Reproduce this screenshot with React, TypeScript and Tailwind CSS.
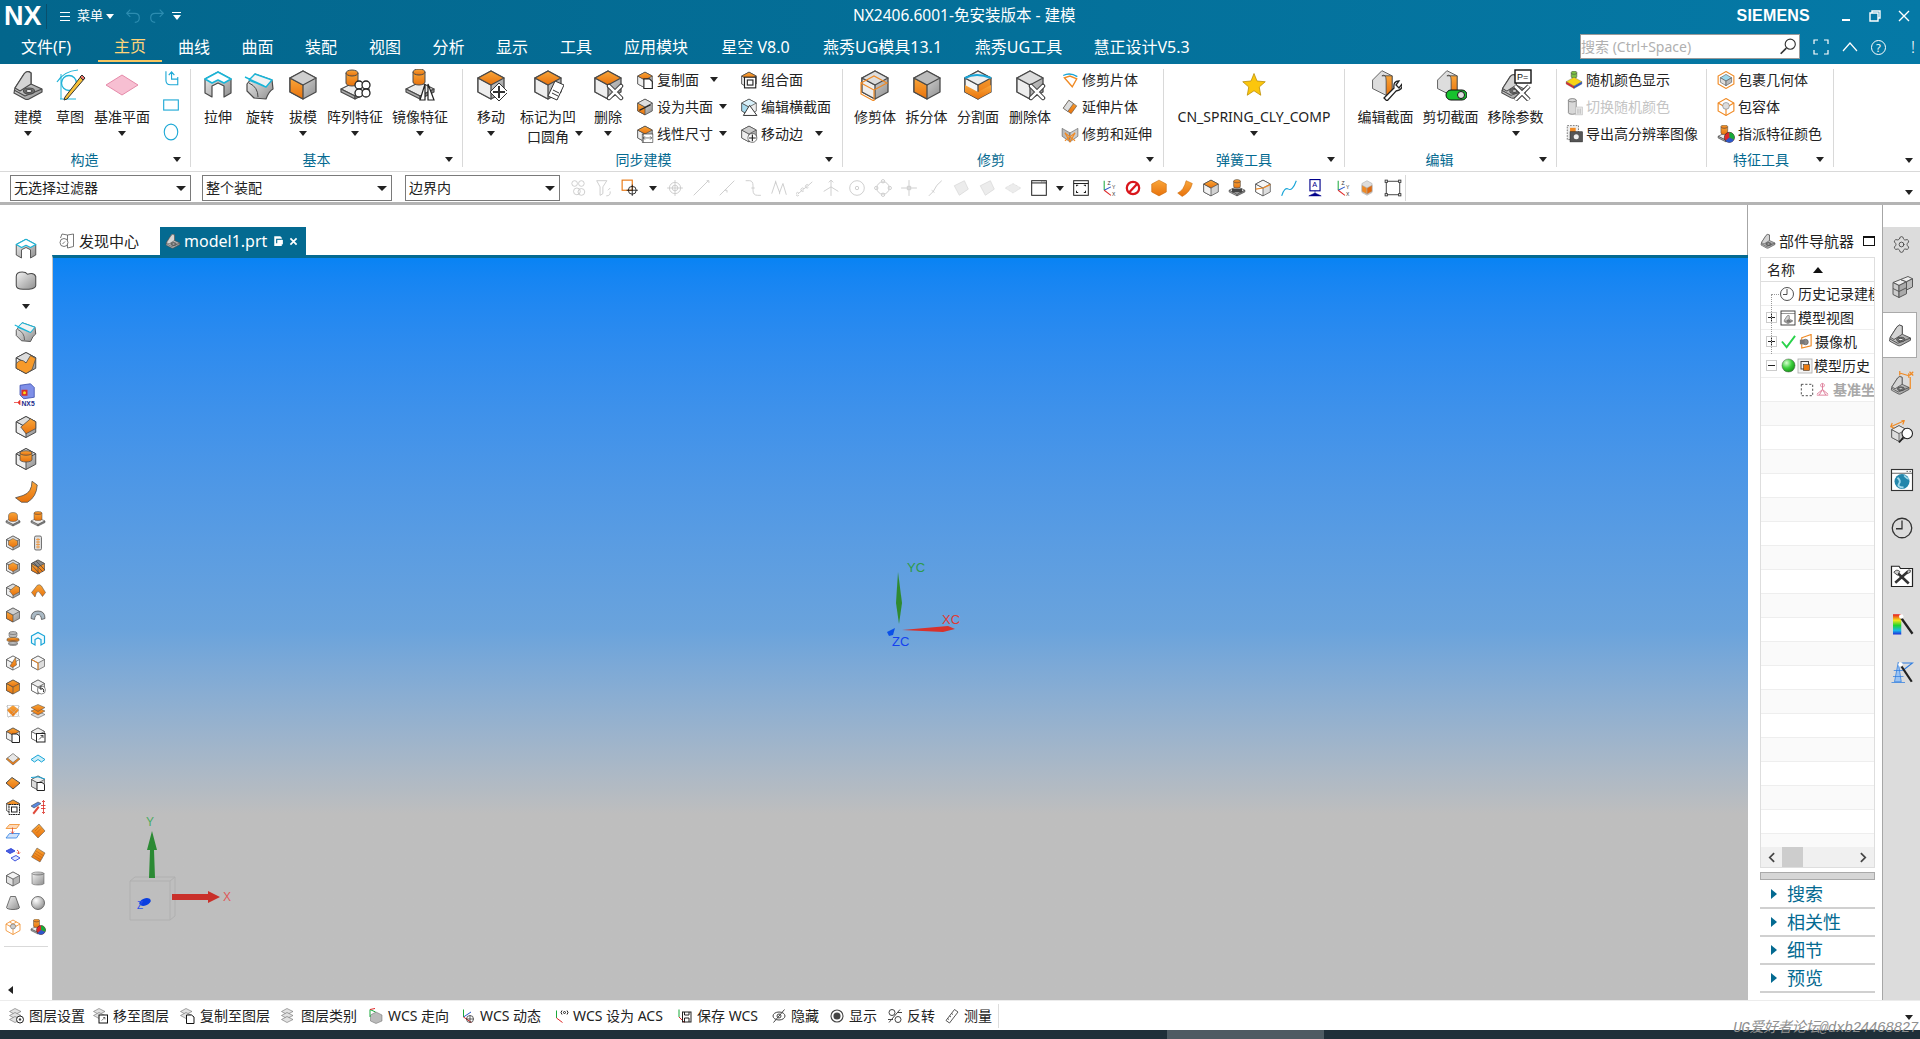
import React from "react";
import { Settings } from "lucide-react";

const OR = "url(#go)";
const GR = "url(#gg)";
const DK = "#4a4a4a";

const cube = (t: string, l: string, r: string) => (
  <g stroke={DK} strokeWidth="1.3" strokeLinejoin="round">
    <polygon points="16,2 29,9 29,23 16,30 3,23 3,9" fill={r} />
    <polygon points="3,9 16,16 16,30 3,23" fill={l} />
    <polygon points="16,2 29,9 16,16 3,9" fill={t} />
  </g>
);
const cross = (
  <g fill="none" strokeLinecap="round">
    <path d="M17 17l12 12M29 17L17 29" stroke="#333" strokeWidth="4.5" />
    <path d="M17 17l12 12M29 17L17 29" stroke="#fff" strokeWidth="2.5" />
  </g>
);
const bracket = (
  <g stroke={DK} strokeWidth="1.2" strokeLinejoin="round">
    <path d="M3 19 12 5Q15 1 19 4L19 15 30 20 30 23 17 30Q15 31 13 30L2 24Z" fill={GR} />
    <path d="M3 19 12 5Q15 1 19 4L19 15 8 22Z" fill="#d4d4d4" />
    <path d="M2 21 13 27 30 20" fill="none" />
    <ellipse cx="17" cy="22" rx="5.5" ry="3" fill="#777" />
    <ellipse cx="17" cy="22" rx="3" ry="1.5" fill="#eee" />
  </g>
);
const plate = (
  <g stroke={DK} strokeWidth="1.2" strokeLinejoin="round">
    <polygon points="16,13 30,20 16,27 2,20" fill="#ececec" />
    <polygon points="2,20 16,27 16,30 2,23" fill="#aaa" />
    <polygon points="30,20 16,27 16,30 30,23" fill="#888" />
  </g>
);
const cyl = (f: string, cx = 16, top = 3, h = 13, rx = 6) => (
  <g stroke={DK} strokeWidth="1">
    <path d={`M${cx - rx} ${top + 2}V${top + h}A${rx} 3 0 0 0 ${cx + rx} ${top + h}V${top + 2}`} fill={f} />
    <ellipse cx={cx} cy={top + 2} rx={rx} ry="3" fill={f} />
  </g>
);
const pl = "fill-none stroke-[#c9c9c9] stroke-[1.6]";

const ICONS: Record<string, React.ReactNode> = {
  bracket,
  sketch: (
    <g>
      <path d="M3 13Q10 2 24 1" fill="none" stroke="#1fb3d8" strokeWidth="1.2" />
      <path d="M6 30H22M7 5V30" fill="none" stroke="#1fb3d8" strokeWidth="1" />
      <circle cx="15" cy="14" r="7.5" fill="none" stroke="#1fb3d8" strokeWidth="1.3" />
      <path d="M11 28 10 31 13 30 31 9 28 6Z" fill="#f8c23a" stroke="#333" strokeWidth="1" />
      <path d="M28 6 31 9 29 11 26 8Z" fill="#e8766f" stroke="#333" strokeWidth="1" />
    </g>
  ),
  plane: <polygon points="16,6 32,16 16,26 0,16" fill="#f7bfd2" stroke="#e58aa9" strokeWidth="1" />,
  datumL: <path d="M7 4V20Q7 28 15 28H28V14M12 11 17 5 22 11M17 5V18H28" fill="none" stroke="#1fa9d6" strokeWidth="2" />,
  rectB: <rect x="3" y="7" width="26" height="18" fill="none" stroke="#1fa9d6" strokeWidth="2" />,
  circB: <ellipse cx="16" cy="16" rx="12" ry="14" fill="none" stroke="#1fa9d6" strokeWidth="2" />,
  extrude: (
    <g strokeLinejoin="round">
      <path d="M3 10 16 3 29 10V24L22 28V17L16 14 10 17V28L3 24Z" fill={GR} stroke={DK} strokeWidth="1.2" />
      <path d="M3 10 16 3 29 10 22 14 16 11 10 14Z" fill="#fff" stroke="#19b5d8" strokeWidth="1.6" />
    </g>
  ),
  revolve: (
    <g strokeLinejoin="round">
      <path d="M3 15 11 5 28 11 29 20Q25 22 22 30L10 29 3 22Z" fill={GR} stroke={DK} strokeWidth="1.2" />
      <path d="M1 8 20 17M11 5 28 11 22 18 5 11Z" fill="#f3f3f3" stroke="#19b5d8" strokeWidth="1.4" />
      <path d="M5 14Q14 18 14 28" fill="none" stroke={DK} />
    </g>
  ),
  draft: cube("#cfcfcf", OR, GR),
  pattern: (
    <g>
      {plate}
      {cyl(OR, 13, 2, 12)}
      <g fill="#fff" stroke="#222" strokeWidth="1.3">
        <circle cx="20" cy="16" r="4" />
        <circle cx="27" cy="16" r="4" />
        <circle cx="20" cy="24" r="4" />
        <circle cx="27" cy="24" r="4" />
      </g>
    </g>
  ),
  mirror: (
    <g>
      {plate}
      {cyl(OR, 15, 1, 12)}
      <path d="M16 31 21 15V31ZM24 31V15L30 31Z" fill="#fff" stroke="#222" strokeWidth="1.2" />
    </g>
  ),
  move: (
    <g>
      {cube(OR, "#eee", GR)}
      <polygon points="24,14 33,23 24,32 15,23" fill="#fff" stroke="#333" />
      <path d="M24 17V29M18 23H30" stroke="#333" strokeWidth="2" />
    </g>
  ),
  tag: (
    <g>
      {cube(OR, "#eee", GR)}
      <polygon points="23,12 32,16 25,31 16,27" fill="#fff" stroke="#333" />
      <path d="M21 21l6 3M20 24l6 3" stroke="#333" />
    </g>
  ),
  del: (
    <g>
      {cube(OR, "#eee", GR)}
      {cross}
    </g>
  ),
  copyFace: (
    <g>
      {cube(OR, "#eee", GR)}
      <path d="M14 14H24L29 19V31H14Z" fill="#fff" stroke="#222" strokeWidth="2" />
    </g>
  ),
  coplanar: (
    <g>
      {cube("#ddd", OR, GR)}
      <path d="M6 22 26 12" stroke="#222" strokeWidth="2" />
    </g>
  ),
  linear: (
    <g>
      {cube(OR, "#eee", GR)}
      <rect x="11" y="16" width="19" height="15" fill="#fff" stroke="#222" />
      <path d="M13 23H28M16 20 13 23 16 26M25 20 28 23 25 26M13 16V31" stroke="#222" fill="none" />
    </g>
  ),
  combine: (
    <g>
      {cube(OR, "#eee", GR)}
      <rect x="8" y="11" width="20" height="19" fill="#fff" stroke="#222" strokeWidth="2" />
      <rect x="13" y="16" width="10" height="9" fill="none" stroke="#222" strokeWidth="2" />
    </g>
  ),
  section: (
    <g>
      {cube("#d8f0fa", "#a8dcf0", "#eee")}
      <path d="M17 13 30 31H6Z" fill="#fff" stroke="#222" strokeWidth="1.6" />
    </g>
  ),
  moveEdge: (
    <g>
      {cube("#ccc", "#eee", GR)}
      <circle cx="22" cy="23" r="8" fill="#fff" stroke="#222" />
      <path d="M22 17V29M16 23H28" stroke="#222" strokeWidth="2" />
    </g>
  ),
  trimBody: (
    <g>
      {cube("#ddd", "#eee", GR)}
      <path d="M2 14 15 21 15 32 2 25ZM2 14 15 7 28 14 15 21" fill="none" stroke="#f08a24" strokeWidth="1.2" />
    </g>
  ),
  split: cube("#bbb", OR, GR),
  divide: (
    <g>
      {cube("#eee", "#f5f5f5", OR)}
      <polygon points="3,16 16,23 29,16 29,23 16,30 3,23" fill={OR} />
      <path d="M3 9Q14 3 29 9" fill="none" stroke="#19a5d8" strokeWidth="2" />
    </g>
  ),
  delBody: (
    <g>
      {cube("#ddd", "#eee", GR)}
      {cross}
    </g>
  ),
  trimSheet: (
    <g fill="none" strokeWidth="2.4">
      <path d="M4 8Q16 2 29 10" stroke="#19a5d8" />
      <path d="M6 12 20 28 28 14 16 9Z" stroke="#f08a24" />
    </g>
  ),
  extSheet: (
    <g>
      <polygon points="14,4 28,14 18,28 4,18" fill={OR} stroke={DK} />
      <polygon points="14,4 22,10 12,24 4,18" fill="#ddd" stroke={DK} />
    </g>
  ),
  trimExt: (
    <g stroke={DK} strokeWidth="1">
      <path d="M2 6 16 14V30L2 20Z" fill="#bbb" />
      <path d="M30 6 16 14V30L30 20Z" fill="#ccc" />
      <path d="M7 14 16 30 25 14M7 28 25 14M25 28 7 14" stroke="#f08a24" strokeWidth="2" fill="none" />
    </g>
  ),
  star: (
    <g transform="translate(4 3) scale(.75)">
      <polygon points="16,2 20,12 31,13 23,20 25,31 16,25 7,31 9,20 1,13 12,12" fill="#fbc60d" stroke="#b88a00" strokeWidth="1" />
    </g>
  ),
  arch: (
    <g stroke={DK} strokeLinejoin="round">
      <path d="M3 13 14 2 26 8V28L19 31 3 23Z" fill="#ddd" />
      <path d="M14 8Q19 5 19 14V31L26 28V8Z" fill={OR} />
      <path d="M3 13 14 8V26" fill="none" />
      <path d="M3 18 14 14" fill="none" />
    </g>
  ),
  editCut: (
    <g>
      <g transform="scale(.85)">
        <path d="M3 13 14 2 26 8V28L19 31 3 23Z" fill="#ddd" stroke={DK} />
        <path d="M14 8Q19 5 19 14V31L26 28V8Z" fill={OR} stroke={DK} />
      </g>
      <path d="M14 29 24 19Q23 12 29 12L26 16 29 19 32 15Q33 21 26 22L17 32Z" fill="#fff" stroke="#222" strokeWidth="1.3" />
    </g>
  ),
  clipCut: (
    <g>
      <g transform="scale(.85)">
        <path d="M3 13 14 2 26 8V28L19 31 3 23Z" fill="#ddd" stroke={DK} />
        <path d="M14 8Q19 5 19 14V31L26 28V8Z" fill={OR} stroke={DK} />
      </g>
      <rect x="11" y="21" width="21" height="10" rx="5" fill="#17c22e" stroke="#111" />
      <circle cx="26" cy="26" r="3.5" fill="#ddd" stroke="#111" />
    </g>
  ),
  removeParam: (
    <g>
      <g transform="scale(.85) translate(0 4)">{bracket}</g>
      <rect x="15" y="1" width="16" height="13" fill="#fff" stroke="#111" strokeWidth="1.4" />
      <text x="17" y="11" fontSize="9" fill="#111" fontFamily="Liberation Sans">P=</text>
      <path d="M15 17 29 31M29 17 15 31" stroke="#333" strokeWidth="4.5" />
      <path d="M15 17 29 31M29 17 15 31" stroke="#fff" strokeWidth="2.5" />
    </g>
  ),
  randColor: (
    <g stroke="#555" strokeWidth=".6">
      {cyl("#7cc142", 16, 1, 9, 5)}
      <polygon points="16,11 30,19 16,27 2,19" fill="#f7d417" />
      <polygon points="2,19 16,27 16,31 2,23" fill="#e02828" />
      <polygon points="30,19 16,27 16,31 30,23" fill="#2b58c9" />
    </g>
  ),
  toggleColor: (
    <g fill="#d2d2d2" stroke="#bbb">
      {cyl("#d8d8d8", 13, 2, 24, 7)}
      <rect x="19" y="16" width="12" height="14" fill="#e6e6e6" />
      <path d="M23 19V28M27 19V28" stroke="#999" />
    </g>
  ),
  exportImg: (
    <g>
      <rect x="4" y="1" width="20" height="25" fill="#eee" stroke="#222" strokeDasharray="3 2" />
      <rect x="9" y="5" width="10" height="8" fill="#f08a24" />
      <rect x="9" y="12" width="22" height="18" fill="#555" stroke="#222" />
      <circle cx="20" cy="21" r="4.5" fill="#eee" />
    </g>
  ),
  wrap: (
    <g>
      <polygon points="16,1 30,9 30,23 16,31 2,23 2,9" fill="#fff" stroke="#f08a24" strokeWidth="2" />
      <polygon points="16,6 26,12 16,18 6,12" fill="#9fd7ea" stroke={DK} />
      <polygon points="6,12 16,18 16,26 6,20" fill="#ddd" stroke={DK} />
      <polygon points="26,12 16,18 16,26 26,20" fill="#bbb" stroke={DK} />
    </g>
  ),
  contain: (
    <g fill="none" stroke="#f08a24" strokeWidth="2">
      <polygon points="16,1 30,9 30,23 16,31 2,23 2,9" />
      <path d="M2 9 16 17 30 9M16 17V31" />
      <circle cx="16" cy="14" r="6" fill="#ddd" stroke="#777" strokeWidth="1" />
    </g>
  ),
  assignColor: (
    <g>
      {plate}
      {cyl(OR, 13, 1, 13, 6)}
      <circle cx="22" cy="22" r="9" fill="#e02828" stroke="#222" />
      <path d="M22 22V13A9 9 0 0 1 30 26Z" fill="#18a93a" />
      <path d="M22 22 30 26A9 9 0 0 1 15 28Z" fill="#2b58c9" />
    </g>
  ),
  cylGray: cyl(GR, 16, 3, 22, 12),
  blob: (
    <path d="M3 10Q3 4 11 4Q16 4 18 7Q27 4 29 10V22Q29 26 20 27H12Q3 27 3 22Z" fill={GR} stroke={DK} strokeWidth="1.4" />
  ),
  face: (
    <g>
      {cube("#ddd", "#eee", GR)}
      <path d="M3 17Q9 8 16 16L22 6 29 10 24 25 16 30 3 23Z" fill="#f79a2a" stroke={DK} />
    </g>
  ),
  nx5: (
    <g>
      <polygon points="8,3 22,1 27,6 27,19 13,21 8,16" fill="#7f8fe8" stroke="#3347a8" />
      <rect x="10" y="9" width="8" height="8" fill="#d8302a" />
      <circle cx="14" cy="13" r="2" fill="#ffd41a" />
      <text x="10" y="30" fontSize="9" fontWeight="700" fill="#1b2a8a" fontFamily="Liberation Sans">NX5</text>
      <path d="M0 26H5L8 23V29L5 26" fill="#e8322a" stroke="#e8322a" />
    </g>
  ),
  faceBlend: (
    <g>
      {cube("#ddd", "#eee", GR)}
      <polygon points="9,16 22,5 29,9 29,18 16,25" fill={OR} stroke={DK} />
    </g>
  ),
  inner: (
    <g>
      {cube("#ddd", "#eee", GR)}
      {cyl(OR, 16, 6, 11, 8)}
    </g>
  ),
  curved: <path d="M2 25 12 22Q24 18 24 3L31 8Q30 24 18 31L10 31Z" fill={OR} stroke={DK} />,
  pOrange: (
    <g>
      {plate}
      <path d="M7 10Q7 3 16 3Q25 3 25 10V16Q25 21 16 21Q7 21 7 16Z" fill={OR} stroke={DK} />
    </g>
  ),
  pCyl: (
    <g>
      {plate}
      {cyl(OR, 16, 2, 14, 8)}
    </g>
  ),
  hexO: (
    <g>
      {cube("#ddd", "#eee", GR)}
      <polygon points="16,7 25,12 25,20 16,25 7,20 7,12" fill={OR} stroke={DK} />
    </g>
  ),
  tall: (
    <g>
      <rect x="9" y="2" width="14" height="28" rx="3" fill="#ddd" stroke={DK} strokeWidth="1.5" />
      <path d="M12 9H20M12 14H20M12 19H20M12 24H20M16 6V27" stroke="#f08a24" strokeWidth="1.4" />
    </g>
  ),
  hatch: (
    <g>
      {cube("#888", OR, OR)}
      <path d="M6 6 26 26M12 4 30 22M3 12 20 30" stroke="#444" strokeWidth="1.4" />
    </g>
  ),
  tube: <path d="M3 19 15 4Q20 2 23 6L31 19 25 27 20 20Q17 15 13 19L10 28Z" fill={OR} stroke={DK} />,
  pipe: <path d="M2 23Q2 8 16 8Q30 8 30 23L23 25Q22 15 16 15Q10 15 9 25Z" fill="#aab9c4" stroke={DK} strokeWidth="1.5" />,
  disc: (
    <g>
      {cyl("#bbb", 16, 2, 8, 8)}
      {cyl(OR, 16, 14, 5, 12)}
      {cyl("#bbb", 16, 22, 4, 9)}
    </g>
  ),
  cyanU: <path d="M3 10 16 3 29 10V24L22 28V17L16 14 10 17V28L3 24Z" fill="#f2fafd" stroke="#19a5d8" strokeWidth="2.4" />,
  wedge: (
    <g>
      {cube("#fff", "#eee", "#fff")}
      <polygon points="10,22 21,5 23,20 15,25" fill={OR} stroke={DK} />
    </g>
  ),
  cubeLine: (
    <g>
      {cube("#f5f5f5", "#fff", "#ddd")}
      <path d="M3 9 16 16 16 30" fill="none" stroke="#f08a24" strokeWidth="2" />
    </g>
  ),
  orangeCube: cube(OR, OR, "#e98a1f"),
  cubeBack: (
    <g>
      {cube("#eee", "#fff", "#ddd")}
      <circle cx="23" cy="22" r="8" fill="#fff" stroke="#222" />
      <path d="M27 26Q29 18 20 18M23 14 19 18 23 22" fill="none" stroke="#222" strokeWidth="2" />
    </g>
  ),
  offset: (
    <g>
      <polygon points="16,5 28,14 16,27 4,14" fill={OR} stroke="#e08a2e" />
      <path d="M2 6 30 28M30 6 6 30" stroke="#bbb" />
      <rect x="5" y="5" width="22" height="22" fill="none" stroke="#aaa" />
    </g>
  ),
  stack: (
    <g stroke={DK}>
      <polygon points="16,17 30,23 16,30 2,23" fill="#ddd" />
      <polygon points="16,10 30,16 16,24 2,16" fill={OR} />
      <polygon points="16,3 30,9 16,17 2,9" fill={OR} />
    </g>
  ),
  cubeCopy: (
    <g>
      {cube(OR, "#eee", "#ddd")}
      <path d="M14 14H24L29 18V31H14Z" fill="#fff" stroke="#222" strokeWidth="2" />
    </g>
  ),
  cubeOut: (
    <g>
      {cube("#eee", "#fff", "#ddd")}
      <rect x="13" y="13" width="17" height="17" fill="#fff" stroke="#222" strokeWidth="2" />
      <path d="M18 25 26 17M21 17H26V22" fill="none" stroke="#222" strokeWidth="1.6" />
    </g>
  ),
  oDia: (
    <g>
      <polygon points="16,6 30,16 16,28 2,16" fill={OR} stroke={DK} />
      <polygon points="16,5 27,14 16,23 5,14" fill="#e8e8e8" stroke={DK} />
    </g>
  ),
  cyanChev: <path d="M2 17 16 8 30 17 23 22 16 17 9 22Z" fill="#cbeef8" stroke="#19a5d8" strokeWidth="2" />,
  oDia2: <polygon points="14,5 30,16 16,28 2,16" fill={OR} stroke={DK} strokeWidth="2" />,
  cubeCopyC: (
    <g>
      {cube("#eee", "#ddd", "#ccc")}
      <path d="M2 5Q16 1 30 8" fill="none" stroke="#19a5d8" strokeWidth="2" />
      <path d="M14 15H24L29 19V31H14Z" fill="#fff" stroke="#222" strokeWidth="2" />
    </g>
  ),
  cubeWin: (
    <g>
      {cube(OR, "#eee", "#ddd")}
      <rect x="8" y="11" width="21" height="20" fill="#fff" stroke="#222" strokeWidth="2" strokeDasharray="4 1" />
      <rect x="13" y="16" width="11" height="10" fill="none" stroke="#222" strokeWidth="2" />
    </g>
  ),
  measureW: (
    <g>
      <path d="M2 14 16 6 22 9 8 18Z" fill="#5a89e0" stroke="#333" />
      <path d="M5 28 16 14 19 17 8 31Z" fill="#e04a3a" />
      <path d="M27 3V29M22 13H31M22 19H31M24 6 27 3 30 6M24 26 27 29 30 26" stroke="#d9281e" fill="none" strokeWidth="1.6" />
    </g>
  ),
  planes: (
    <g>
      <polygon points="9,3 29,3 23,11 2,11" fill="#fdd9b8" stroke="#f08a24" strokeWidth="1.6" />
      <polygon points="9,21 29,21 23,30 2,30" fill="#cfe2fb" stroke="#2f7de0" strokeWidth="1.6" />
      <path d="M15 9V20M12 17 15 21 18 17" stroke="#e0402a" fill="none" strokeWidth="1.5" />
    </g>
  ),
  oSq: (
    <g>
      <polygon points="18,2 30,16 16,30 3,16" fill={OR} stroke={DK} />
      <path d="M10 16 18 8M13 20 22 11" stroke="#b85a08" />
    </g>
  ),
  bluePl: (
    <g fill="#dfe6ff" stroke="#2d43d8" strokeWidth="1.8">
      <polygon points="2,8 12,3 20,8 10,13" fill="#4a5fe0" />
      <polygon points="12,22 22,17 30,22 20,28" />
      <path d="M24 6Q29 8 27 13M24 11 27 14 30 11" stroke="#e0402a" fill="none" />
    </g>
  ),
  oStack2: (
    <g stroke={DK}>
      <polygon points="14,2 30,12 20,30 3,20" fill={OR} />
      <path d="M9 12 25 22M6 16 22 26M12 8 28 18" stroke="#b85a08" />
    </g>
  ),
  cubeG: cube("#f3f3f3", "#e2e2e2", "#b5b5b5"),
  cone: <path d="M11 3H21L29 25A13 4 0 0 1 3 25Z" fill={GR} stroke={DK} strokeWidth="1.5" />,
  sphere: <circle cx="16" cy="16" r="13" fill="url(#gs)" stroke={DK} strokeWidth="1.5" />,
  orWire: (
    <g fill="none" stroke="#f08a24" strokeWidth="1.6">
      <polygon points="16,2 30,10 30,23 16,31 2,23 2,10" />
      <path d="M2 10 16 18 30 10M16 18V31M9 6 23 14M23 6 9 14" />
      <circle cx="16" cy="15" r="5" fill="#ccc" stroke="#888" />
    </g>
  ),
  dLink: (
    <g className={pl}>
      <circle cx="10" cy="8" r="5" />
      <circle cx="22" cy="8" r="5" />
      <circle cx="14" cy="22" r="6" />
      <circle cx="22" cy="23" r="6" />
    </g>
  ),
  dFilter: <path d="M3 3H21L14 14V26L9 29V14ZM20 30Q28 30 27 22M23 20 27 16" className={pl} />,
  snapO: (
    <g>
      <rect x="2" y="2" width="18" height="18" fill="none" stroke="#e8740c" strokeWidth="2" />
      <circle cx="20" cy="20" r="7" fill="none" stroke="#111" strokeWidth="1.5" />
      <path d="M20 10V30M10 20H30" stroke="#111" strokeWidth="1.5" />
    </g>
  ),
  dTarget: <path d="M16 2V30M2 16H30M26 16A10 10 0 1 1 6 16A10 10 0 1 1 26 16M21 16A5 5 0 1 1 11 16A5 5 0 1 1 21 16" className={pl} />,
  dLine: <path d="M3 29 29 3M26 3H30V7" className={pl} />,
  dLine2: <path d="M3 29 29 3M12 20H16V24" className={pl} />,
  dCurve: <path d="M3 3H10Q16 3 16 12V20Q16 29 24 29H30M13 16H19" className={pl} />,
  dZig: <path d="M3 26 10 5 17 24 23 8 29 28M10 3V8M17 22V27" className={pl} />,
  dDots: <path d="M3 27 12 19 20 13 29 5M5 25A3 3 0 1 0 5 29M14 17A3 3 0 1 0 14 21M22 11A3 3 0 1 0 22 15" className={pl} />,
  dFork: <path d="M16 30V14M16 14 3 22M16 14 29 22M16 14V2M12 6 16 2 20 6" className={pl} />,
  dRing: (
    <g className={pl}>
      <circle cx="16" cy="16" r="13" />
      <circle cx="16" cy="16" r="3" />
    </g>
  ),
  dRing4: (
    <g className={pl}>
      <circle cx="16" cy="16" r="11" />
      <circle cx="16" cy="4" r="3" />
      <circle cx="16" cy="28" r="3" />
      <circle cx="4" cy="16" r="3" />
      <circle cx="28" cy="16" r="3" />
    </g>
  ),
  dPlus: <path d="M16 2V30M2 16H30M13 13H19V19H13Z" className={pl} />,
  dCurve2: <path d="M28 3Q18 10 13 22L5 30M10 20 15 24" className={pl} />,
  dFace: <path d="M4 12 22 3 29 18 13 29Z" fill="#ececec" stroke="#cfcfcf" />,
  dDia: <polygon points="16,8 30,16 16,25 2,16" fill="#ececec" stroke="#cfcfcf" strokeDasharray="2 1" />,
  window: (
    <g fill="none" stroke="#222" strokeWidth="1.8">
      <rect x="3" y="3" width="26" height="26" />
      <path d="M3 7H29" />
      <path d="M20 5H22M24 5H26" strokeWidth="1" />
    </g>
  ),
  fit: (
    <g fill="none" stroke="#222" strokeWidth="1.8">
      <rect x="3" y="3" width="26" height="26" />
      <path d="M3 8H29M8 13V11H11M24 13V11H21M8 21V24H11M24 21V24H21" />
    </g>
  ),
  axes: (
    <g fill="none" strokeWidth="1.8">
      <path d="M11 20V3" stroke="#18a93a" />
      <path d="M11 20 23 14" stroke="#2b58c9" />
      <path d="M11 20 23 29" stroke="#e02828" />
      <text x="17" y="10" fontSize="9" fill="#333" stroke="none" fontFamily="Liberation Sans">Z</text>
      <text x="25" y="18" fontSize="9" fill="#333" stroke="none" fontFamily="Liberation Sans">Y</text>
      <text x="25" y="31" fontSize="9" fill="#333" stroke="none" fontFamily="Liberation Sans">X</text>
    </g>
  ),
  no: (
    <g fill="none" stroke="#d9161c" strokeWidth="4">
      <circle cx="16" cy="16" r="11" />
      <path d="M9 24 24 8" />
    </g>
  ),
  orangeHex: <polygon points="16,2 29,9 29,23 16,30 3,23 3,9" fill={OR} stroke="#c96a0a" />,
  orangeSheet: <path d="M3 25Q14 20 18 3L29 8Q25 24 11 31Z" fill={OR} stroke="#c96a0a" />,
  cubeTop: cube(OR, "#f2f2f2", "#d2d2d2"),
  stamp: (
    <g>
      {plate}
      {cyl(OR, 16, 2, 11, 6)}
      <rect x="7" y="17" width="18" height="7" fill="#444" />
    </g>
  ),
  cubeW: (
    <g>
      {cube("#f5f5f5", "#fff", "#ddd")}
      <path d="M3 18 16 16 29 10" fill="none" stroke="#f08a24" strokeWidth="2" />
    </g>
  ),
  spline: <path d="M3 30Q8 14 15 18T29 3" fill="none" stroke="#19a5d8" strokeWidth="2" />,
  pin: (
    <g>
      <rect x="7" y="1" width="18" height="20" fill="#fff" stroke="#00008b" strokeWidth="2" />
      <text x="11" y="15" fontSize="13" fill="#00008b" fontFamily="Liberation Sans">A</text>
      <path d="M16 21V27M5 30H27L16 25Z" stroke="#00008b" fill="#00008b" />
    </g>
  ),
  smallO: (
    <g stroke="#aaa">
      <polygon points="16,3 25,8 25,24 16,29 7,24 7,8" fill="#ddd" />
      <polygon points="7,11 16,16 16,27 7,22" fill="#f08a24" />
      <polygon points="25,11 16,16 16,27 25,22" fill="#e06a10" />
    </g>
  ),
  rectC: (
    <g stroke="#333" fill="#fff" strokeWidth="1.6">
      <rect x="4" y="4" width="24" height="24" fill="none" />
      <rect x="2" y="2" width="4" height="4" />
      <rect x="26" y="2" width="4" height="4" />
      <rect x="2" y="26" width="4" height="4" />
      <rect x="26" y="26" width="4" height="4" />
    </g>
  ),
  discover: (
    <g fill="none" stroke="#555" strokeWidth="1.6">
      <path d="M17 4 29 2V27L17 30ZM17 4 6 2 3 10" />
      <circle cx="10" cy="19" r="8" fill="#fff" />
      <path d="M7 22 12 17" />
    </g>
  ),
  docSm: (
    <g fill="#fff">
      <path d="M6 3H22L26 7V29H6Z" />
      <path d="M11 10H26V22H11Z" fill="#046a91" />
      <path d="M14 13H29V25H14Z" />
    </g>
  ),
  close: <path d="M7 7 25 25M25 7 7 25" stroke="#fff" strokeWidth="5" />,
  layers: (
    <g stroke="#555" fill="#e2e2e2">
      <polygon points="12,1 24,7 12,13 1,7" />
      <polygon points="12,9 24,15 12,21 1,15" />
      <polygon points="12,17 24,23 12,29 1,23" />
    </g>
  ),
  layerSet: (
    <g stroke="#555" fill="#e2e2e2">
      <polygon points="12,1 24,7 12,13 1,7" />
      <polygon points="12,9 24,15 12,21 1,15" />
      <polygon points="12,17 24,23 12,29 1,23" />
      <circle cx="22" cy="23" r="7" fill="#fff" stroke="#222" strokeWidth="2" />
      <circle cx="22" cy="23" r="2" fill="#222" />
    </g>
  ),
  layerMove: (
    <g stroke="#555" fill="#e2e2e2">
      <polygon points="12,1 24,7 12,13 1,7" />
      <polygon points="12,9 24,15 12,21 1,15" />
      <rect x="12" y="14" width="17" height="16" fill="#fff" stroke="#111" strokeWidth="2" />
      <path d="M17 25 24 19M20 19H24V23" fill="none" stroke="#111" />
    </g>
  ),
  layerCopy: (
    <g stroke="#555" fill="#e2e2e2">
      <polygon points="12,1 24,7 12,13 1,7" />
      <polygon points="12,9 24,15 12,21 1,15" />
      <path d="M13 14H23L28 18V31H13Z" fill="#fff" stroke="#111" strokeWidth="2" />
    </g>
  ),
  wcsO: (
    <g>
      <polygon points="16,8 28,14 28,26 16,31 5,26 5,14" fill="#bbb" stroke="#666" />
      <path d="M4 18V3M4 3 15 8" stroke="#18a93a" strokeWidth="2" />
      <path d="M4 3 14 1" stroke="#e02828" strokeWidth="2" />
    </g>
  ),
  wcsD: (
    <g fill="none" strokeWidth="2">
      <path d="M7 18V3" stroke="#18a93a" />
      <path d="M7 18 22 8" stroke="#2b58c9" />
      <path d="M7 18 23 29" stroke="#e02828" />
      <circle cx="20" cy="22" r="7" stroke="#222" strokeWidth="1.4" />
      <path d="M20 15V29M13 22H27" stroke="#222" strokeWidth="1.4" />
    </g>
  ),
  wcsA: (
    <g fill="none" strokeWidth="2">
      <path d="M7 20V5" stroke="#18a93a" />
      <path d="M7 20 19 29" stroke="#e02828" />
      <path d="M18 5Q14 9 18 13M28 5Q32 9 28 13" stroke="#222" />
      <circle cx="23" cy="9" r="2" stroke="#222" />
    </g>
  ),
  wcsS: (
    <g fill="none" strokeWidth="2">
      <path d="M4 18V3" stroke="#18a93a" />
      <path d="M4 18 15 29" stroke="#e02828" />
      <rect x="11" y="8" width="17" height="20" stroke="#222" />
      <path d="M15 8V14H24V8M15 28V20H24V28" stroke="#222" />
    </g>
  ),
  hide: (
    <g fill="none" stroke="#444" strokeWidth="2">
      <ellipse cx="16" cy="16" rx="12" ry="8" />
      <circle cx="16" cy="16" r="4" />
      <path d="M27 3 5 29" />
    </g>
  ),
  show: (
    <g fill="none" stroke="#444" strokeWidth="2.2">
      <circle cx="16" cy="16" r="12" />
      <circle cx="16" cy="16" r="6" fill="#444" />
    </g>
  ),
  invert: (
    <g fill="none" stroke="#444" strokeWidth="2">
      <circle cx="10" cy="9" r="6" />
      <circle cx="22" cy="23" r="6" />
      <path d="M26 3 4 29M20 9H30M2 23H12" />
    </g>
  ),
  measure: <path d="M4 25 21 3 28 8 11 30ZM7 21 10 23M11 16 14 18M15 11 18 13" fill="none" stroke="#444" strokeWidth="1.8" />,
  mag: (
    <g fill="none" stroke="#333" strokeWidth="2">
      <circle cx="20" cy="11" r="9" />
      <path d="M13 18 3 28" strokeWidth="3" />
    </g>
  ),
  clock: (
    <g fill="none" stroke="#333" strokeWidth="1.7">
      <circle cx="16" cy="16" r="13" />
      <path d="M16 6V17H8" />
    </g>
  ),
  viewFolder: (
    <g>
      <rect x="2" y="2" width="28" height="28" fill="#fff" stroke="#333" strokeWidth="1.8" />
      <path d="M2 7H30" stroke="#333" />
      <g transform="translate(7 9) scale(.6)">{bracket}</g>
    </g>
  ),
  cam: (
    <g>
      <polygon points="8,8 28,1 28,25 8,30" fill="#fff" stroke="#f08a24" strokeWidth="2.4" />
      <circle cx="16" cy="17" r="6" fill="#888" stroke="#444" />
      <rect x="4" y="12" width="10" height="10" fill="#777" />
    </g>
  ),
  ball: <circle cx="16" cy="16" r="14" fill="url(#gb)" stroke="#555" />,
  history: (
    <g>
      <rect x="2" y="2" width="28" height="28" fill="#f4f4f4" stroke="#aaa" strokeWidth="1.6" />
      <rect x="8" y="7" width="15" height="15" fill="none" stroke="#333" strokeWidth="1.8" />
      <rect x="13" y="13" width="12" height="12" fill="#ea7a10" stroke="#222" />
    </g>
  ),
  dashed: <rect x="3" y="3" width="26" height="26" fill="none" stroke="#222" strokeWidth="1.8" strokeDasharray="5 4" />,
  datumCsys: <path d="M16 3V16M16 16 4 26M16 16 28 26M4 28H28M16 3A4 4 0 1 1 15.9 3M9 28 16 16 23 28" fill="none" stroke="#de7e9a" strokeWidth="2" />,
  blocks: (
    <g stroke="#555" strokeLinejoin="round" strokeWidth="1.3">
      <polygon points="4,10 14,6 22,9 12,14" fill="#eee" />
      <polygon points="4,10 12,14 12,30 4,26" fill="#ccc" />
      <polygon points="12,14 22,9 22,25 12,30" fill="#aaa" />
      <polygon points="14,6 24,2 30,5 22,9" fill="#eee" />
      <polygon points="22,9 30,5 30,16 22,20" fill="#bbb" />
      <path d="M4 18 12 22 22 17" fill="none" />
    </g>
  ),
  bracketDim: (
    <g>
      <g transform="translate(0 5) scale(.85)">{bracket}</g>
      <path d="M14 3 24 6M13 0V6M25 3V9M26 1 31 6M31 1 26 6M27 8V24" stroke="#f08a24" strokeWidth="1.6" fill="none" />
    </g>
  ),
  cubeMag: (
    <g>
      <g transform="translate(0 6) scale(.75)">{cube("#eee", "#ddd", "#ccc")}</g>
      <path d="M1 9 19 1M3 4 1 9 6 11M15 0 19 1 17 6" stroke="#f08a24" strokeWidth="1.6" fill="none" />
      <circle cx="23" cy="18" r="7" fill="#fff" stroke="#222" strokeWidth="1.4" />
      <path d="M18 23 12 30" stroke="#222" strokeWidth="2.5" />
    </g>
  ),
  globe: (
    <g>
      <rect x="2" y="2" width="28" height="28" fill="#fff" stroke="#333" strokeWidth="1.5" />
      <path d="M2 7H30M22 4.5H24M26 4.5H28" stroke="#333" />
      <circle cx="16" cy="18" r="10" fill="#2386ab" />
      <path d="M10 13Q15 17 12 21T18 26M19 10Q23 15 25 14" stroke="#9fd8ea" strokeWidth="2.4" fill="none" />
    </g>
  ),
  tools: (
    <g>
      <path d="M2 30V3H12L14 6H30V30Z" fill="#fff" stroke="#222" strokeWidth="1.6" />
      <path d="M7 25 24 10M9 11 25 26" stroke="#333" strokeWidth="3.5" />
      <path d="M5 11Q9 6 13 10L10 15ZM27 8Q22 7 23 13L27 11Z" fill="#ccc" stroke="#222" />
    </g>
  ),
  rainbow: (
    <g>
      <rect x="4" y="3" width="11" height="27" fill="url(#gr)" />
      <path d="M15 8 30 29" stroke="#222" strokeWidth="3" />
      <circle cx="15" cy="6" r="3" fill="#fff" />
    </g>
  ),
  blueWand: (
    <g>
      <path d="M6 29 11 3 15 29ZM2 30H20M4 22H18M5 14H17" stroke="#2f7de0" fill="#9bc4f4" />
      <path d="M15 4H30L17 14" fill="none" stroke="#2f7de0" strokeWidth="1.5" />
      <path d="M15 8 29 29" stroke="#222" strokeWidth="3" />
      <circle cx="14" cy="6" r="3" fill="#fff" />
    </g>
  ),
};

function Ic({ n, s = 32, className = "" }: { n: string; s?: number; className?: string }) {
  return (
    <svg viewBox="0 0 32 32" width={s} height={s} className={`shrink-0 ${className}`}>
      {ICONS[n]}
    </svg>
  );
}

function Caret({ className = "" }: { className?: string }) {
  return <span className={`block w-0 h-0 shrink-0 border-x-[4.5px] border-t-[5px] border-x-transparent border-t-[#222] ${className}`} />;
}

function Big({ w, icon, label, label2, caret }: { w: string; icon: string; label: string; label2?: string; caret?: boolean }) {
  return (
    <div className={`${w} shrink-0 flex flex-col items-center`}>
      <Ic n={icon} s={32} />
      <span className="mt-[6px] leading-[20px] whitespace-nowrap">{label}</span>
      {label2 && <span className="leading-[20px] whitespace-nowrap">{label2}</span>}
      {caret && <Caret className="mt-[4px]" />}
    </div>
  );
}

function Small({ icon, label, caret, muted }: { icon: string; label: string; caret?: string; muted?: boolean }) {
  return (
    <div className="h-[27px] flex items-center whitespace-nowrap">
      <Ic n={icon} s={18} className="mr-[3px]" />
      <span className={muted ? "text-[#c4c4c4]" : ""}>{label}</span>
      {caret && <Caret className={caret} />}
    </div>
  );
}

function Group({ w, label, caret = true, labelClass = "", children }: { w: string; label?: string; caret?: boolean; labelClass?: string; children: React.ReactNode }) {
  return (
    <div className={`${w} shrink-0 h-[98px] mt-[5px] border-r border-[#d9d9d9] flex flex-col`}>
      <div className="h-[83px] flex">{children}</div>
      <div className="h-[15px] relative flex items-center justify-center">
        {label && <span className={`text-[#046a91] leading-[15px] ${labelClass}`}>{label}</span>}
        {caret && <Caret className="absolute right-[9px] top-[5px]" />}
      </div>
    </div>
  );
}

const MENU = [
  ["文件(F)", "w-[64px] mr-[20px]"],
  ["主页", "w-[64px]"],
  ["曲线", "w-[64px]"],
  ["曲面", "w-[63px]"],
  ["装配", "w-[64px]"],
  ["视图", "w-[64px]"],
  ["分析", "w-[63px]"],
  ["显示", "w-[64px]"],
  ["工具", "w-[64px]"],
  ["应用模块", "w-[96px]"],
  ["星空 V8.0", "w-[103px]"],
  ["燕秀UG模具13.1", "w-[151px]"],
  ["燕秀UG工具", "w-[121px]"],
  ["慧正设计V5.3", "w-[125px]"],
];

const SEL_ICONS = [
  "dLink", "dFilter", "snapO", "^", "dTarget", "dLine", "dLine2", "dCurve", "dZig", "dDots", "dFork", "dRing", "dRing4", "dPlus", "dCurve2", "dFace", "dFace", "dDia", "window", "^^",
  "fit", "axes", "no", "orangeHex", "orangeSheet", "cubeTop", "stamp", "cubeW", "spline", "pin", "axes", "smallO", "rectC",
];

const LEFT_SINGLE = ["extrude", "blob", "^", "revolve", "face", "nx5", "faceBlend", "inner", "curved"];
const LEFT_GRID = [
  "pOrange", "pCyl", "hexO", "tall", "hexO", "hatch", "faceBlend", "tube", "draft", "pipe", "disc", "cyanU",
  "wedge", "cubeLine", "orangeCube", "cubeBack", "offset", "stack", "cubeCopy", "cubeOut", "oDia", "cyanChev", "oDia2", "cubeCopyC",
  "cubeWin", "measureW", "planes", "oSq", "bluePl", "oStack2", "cubeG", "cylGray", "cone", "sphere", "orWire", "assignColor",
];

const STATUS = [
  ["layerSet", "图层设置", "w-[84px]"],
  ["layerMove", "移至图层", "w-[87px]"],
  ["layerCopy", "复制至图层", "w-[101px]"],
  ["layers", "图层类别", "w-[87px]"],
  ["wcsO", "WCS 走向", "w-[92px]"],
  ["wcsD", "WCS 动态", "w-[93px]"],
  ["wcsA", "WCS 设为 ACS", "w-[124px]"],
  ["wcsS", "保存 WCS", "w-[94px]"],
  ["hide", "隐藏", "w-[58px]"],
  ["show", "显示", "w-[58px]"],
  ["invert", "反转", "w-[57px]"],
  ["measure", "测量", "w-[54px]"],
];

const RAIL = [
  ["blocks", "h-[51px] w-full"],
  ["bracket", "h-[46px] w-[34px] self-start bg-white border-y border-r border-[#aaa]"],
  ["bracketDim", "h-[50px] w-full"],
  ["cubeMag", "h-[48px] w-full"],
  ["globe", "h-[48px] w-full"],
  ["clock", "h-[48px] w-full"],
  ["tools", "h-[48px] w-full"],
  ["rainbow", "h-[48px] w-full"],
  ["blueWand", "h-[48px] w-full"],
];

function Combo({ w, label }: { w: string; label: string }) {
  return (
    <div className={`${w} h-[26px] border border-[#7a7a7a] flex items-center justify-between px-[3px] pr-[4px] shrink-0`}>
      <span className="text-[14px] leading-none">{label}</span>
      <Caret className="border-x-[5px]" />
    </div>
  );
}

function TreeBox({ minus }: { minus?: boolean }) {
  return (
    <span className="w-[11px] h-[11px] border border-[#ccc] bg-white relative shrink-0 flex items-center justify-center">
      <span className="w-[7px] h-px bg-[#222]" />
      {!minus && <span className="absolute w-px h-[7px] bg-[#222]" />}
    </span>
  );
}

export default function App() {
  return (
    <div className="w-[1920px] h-[1039px] overflow-hidden flex flex-col relative bg-white text-[#222] text-[14px] font-['Noto_Sans','Noto_Sans_CJK_SC',sans-serif]">
      <svg className="absolute w-0 h-0">
        <defs>
          <linearGradient id="gg" x1="0" y1="0" x2="1" y2="1">
            <stop offset="0" stopColor="#f4f4f4" />
            <stop offset="1" stopColor="#8e8e8e" />
          </linearGradient>
          <linearGradient id="go" x1="0" y1="0" x2="0" y2="1">
            <stop offset="0" stopColor="#f9a63a" />
            <stop offset="1" stopColor="#e8720c" />
          </linearGradient>
          <radialGradient id="gs" cx=".35" cy=".3" r=".8">
            <stop offset="0" stopColor="#fff" />
            <stop offset="1" stopColor="#8a8a8a" />
          </radialGradient>
          <radialGradient id="gb" cx=".35" cy=".3" r=".8">
            <stop offset="0" stopColor="#d6ffd0" />
            <stop offset=".5" stopColor="#3ccf3c" />
            <stop offset="1" stopColor="#128a12" />
          </radialGradient>
          <linearGradient id="gr" x1="0" y1="0" x2="0" y2="1">
            <stop offset="0" stopColor="#e8161c" />
            <stop offset=".3" stopColor="#f4e71a" />
            <stop offset=".55" stopColor="#1ed62e" />
            <stop offset=".8" stopColor="#1ab8e8" />
            <stop offset="1" stopColor="#1c2ad8" />
          </linearGradient>
        </defs>
      </svg>

      {/* Title + menu */}
      <header className="h-[64px] shrink-0 bg-linear-to-r from-[#03668c] to-[#0579a6] text-white flex flex-col">
        <div className="h-[32px] flex items-center">
          <div className="w-[853px] flex items-center shrink-0">
            <span className="ml-[4px] w-[38px] text-[27px] leading-none font-bold font-['Liberation_Sans',sans-serif]">NX</span>
            <span className="ml-[4px] w-px h-[25px] bg-[#0a4f6c]" />
            <span className="ml-[13px] w-[10px] h-[9px] border-y border-white relative flex items-center">
              <span className="w-full h-px bg-white" />
            </span>
            <span className="ml-[7px] text-[13px]">菜单</span>
            <Caret className="ml-[3px] !border-t-white" />
            <svg viewBox="0 0 20 20" width={18} height={18} className="ml-[10px] text-[#2c8cb0]">
              <path d="M7 3 3 7 7 11M3 7H12Q17 7 17 12T12 17" fill="none" stroke="currentColor" strokeWidth="1.3" />
            </svg>
            <svg viewBox="0 0 20 20" width={18} height={18} className="ml-[6px] text-[#2c8cb0]">
              <path d="M13 3 17 7 13 11M17 7H8Q3 7 3 12T8 17" fill="none" stroke="currentColor" strokeWidth="1.3" />
            </svg>
            <span className="ml-[6px] flex flex-col items-center gap-[2px]">
              <span className="w-[9px] h-px bg-white" />
              <Caret className="!border-t-white" />
            </span>
          </div>
          <span className="text-[15.5px] whitespace-nowrap">NX2406.6001-免安装版本 - 建模</span>
          <div className="ml-auto flex items-center pr-[10px]">
            <span className="text-[16px] font-bold tracking-[0.2px] font-['Liberation_Sans',sans-serif] mr-[32px]">SIEMENS</span>
            <span className="w-[8px] h-[2px] bg-white mt-[8px] mr-[19px]" />
            <svg viewBox="0 0 12 12" width={12} height={12} className="mr-[17px]">
              <path d="M3 3V1H11V8H9M1 3H9V11H1Z" fill="none" stroke="#fff" strokeWidth="1.4" />
            </svg>
            <svg viewBox="0 0 12 12" width={12} height={12}>
              <path d="M1 1 11 11M11 1 1 11" stroke="#fff" strokeWidth="1.4" />
            </svg>
          </div>
        </div>
        <nav className="h-[32px] flex items-start">
          <div className="flex pl-[14px] shrink-0">
            {MENU.map(([label, w], i) => (
              <span
                key={label}
                className={`${w} h-[30px] flex items-center justify-center text-[16px] whitespace-nowrap ${
                  i === 1 ? "text-[#ffd479] border-b-2 border-[#f5c560]" : ""
                }`}
              >
                {label}
              </span>
            ))}
          </div>
          <div className="ml-[376px] mt-[2px] w-[220px] h-[25px] bg-white border border-[#9a9a9a] flex items-center justify-between shrink-0">
            <span className="text-[#b0b0b0] text-[14px] leading-none">搜索 (Ctrl+Space)</span>
            <Ic n="mag" s={18} className="mr-[2px]" />
          </div>
          <div className="flex items-center h-[30px] ml-[13px] gap-[13px]">
            <svg viewBox="0 0 16 16" width={16} height={16}>
              <path d="M1 5V1H5M11 1H15V5M1 11V15H5M11 15H15V11" fill="none" stroke="#fff" strokeWidth="1.2" />
            </svg>
            <svg viewBox="0 0 16 16" width={16} height={16}>
              <path d="M1 12 8 4 15 12" fill="none" stroke="#fff" strokeWidth="1.2" />
            </svg>
            <span className="w-[15px] h-[15px] border border-white rounded-full text-[11px] leading-[13px] text-center">?</span>
            <span className="ml-[12px] text-[16px] font-light leading-none">!</span>
          </div>
        </nav>
      </header>

      {/* Ribbon */}
      <section className="h-[108px] shrink-0 flex border-b border-[#d9d9d9] relative">
        <Group w="w-[191px]" label="构造" labelClass="mr-[21px]">
          <div className="w-[6px]" />
          <Big w="w-[44px]" icon="bracket" label="建模" caret />
          <Big w="w-[40px]" icon="sketch" label="草图" />
          <Big w="w-[64px]" icon="plane" label="基准平面" caret />
          <div className="flex flex-col items-center w-[34px] gap-[9px]">
            <Ic n="datumL" s={18} />
            <Ic n="rectB" s={18} />
            <Ic n="circB" s={18} />
          </div>
        </Group>
        <Group w="w-[272px]" label="基本" labelClass="mr-[20px]">
          <div className="w-[6px]" />
          <Big w="w-[42px]" icon="extrude" label="拉伸" />
          <Big w="w-[42px]" icon="revolve" label="旋转" />
          <Big w="w-[44px]" icon="draft" label="拔模" caret />
          <Big w="w-[60px]" icon="pattern" label="阵列特征" caret />
          <Big w="w-[70px]" icon="mirror" label="镜像特征" caret />
        </Group>
        <Group w="w-[380px]" label="同步建模" labelClass="mr-[18px]">
          <div className="w-[3px]" />
          <Big w="w-[50px]" icon="move" label="移动" caret />
          <div className="relative flex">
            <Big w="w-[64px]" icon="tag" label="标记为凹" label2="口圆角" />
            <Caret className="absolute right-[-3px] top-[62px]" />
          </div>
          <Big w="w-[56px]" icon="del" label="删除" caret />
          <div className="w-[104px] -mt-[3px] flex flex-col">
            <Small icon="copyFace" label="复制面" caret="ml-[11px]" />
            <Small icon="coplanar" label="设为共面" caret="ml-[6px]" />
            <Small icon="linear" label="线性尺寸" caret="ml-[6px]" />
          </div>
          <div className="-mt-[3px] flex flex-col">
            <Small icon="combine" label="组合面" />
            <Small icon="section" label="编辑横截面" />
            <Small icon="moveEdge" label="移动边" caret="ml-[12px]" />
          </div>
        </Group>
        <Group w="w-[321px]" label="修剪" labelClass="mr-[24px]">
          <div className="w-[6px]" />
          <Big w="w-[52px]" icon="trimBody" label="修剪体" />
          <Big w="w-[51px]" icon="split" label="拆分体" />
          <Big w="w-[52px]" icon="divide" label="分割面" />
          <Big w="w-[52px]" icon="delBody" label="删除体" />
          <div className="pl-[5px] -mt-[3px] flex flex-col">
            <Small icon="trimSheet" label="修剪片体" />
            <Small icon="extSheet" label="延伸片体" />
            <Small icon="trimExt" label="修剪和延伸" />
          </div>
        </Group>
        <Group w="w-[181px]" label="弹簧工具" labelClass="mr-[20px]">
          <div className="w-full flex flex-col items-center">
            <Big w="w-full" icon="star" label="CN_SPRING_CLY_COMP" caret />
          </div>
        </Group>
        <Group w="w-[212px]" label="编辑" labelClass="mr-[22px]">
          <div className="w-[8px]" />
          <Big w="w-[65px]" icon="editCut" label="编辑截面" />
          <Big w="w-[65px]" icon="clipCut" label="剪切截面" />
          <Big w="w-[65px]" icon="removeParam" label="移除参数" caret />
        </Group>
        <Group w="w-[150px]" caret={false}>
          <div className="pl-[8px] -mt-[3px] flex flex-col">
            <Small icon="randColor" label="随机颜色显示" />
            <Small icon="toggleColor" label="切换随机颜色" muted />
            <Small icon="exportImg" label="导出高分辨率图像" />
          </div>
        </Group>
        <Group w="w-[127px]" label="特征工具" labelClass="mr-[18px]">
          <div className="pl-[10px] -mt-[3px] flex flex-col">
            <Small icon="wrap" label="包裹几何体" />
            <Small icon="contain" label="包容体" />
            <Small icon="assignColor" label="指派特征颜色" />
          </div>
        </Group>
        <div className="flex-1 flex justify-end items-end pr-[7px] pb-[8px]">
          <Caret />
        </div>
      </section>

      {/* Selection bar */}
      <section className="h-[33px] shrink-0 flex items-start pt-[3px] border-b-[3px] border-[#b4b4b4]">
        <div className="w-[10px] shrink-0" />
        <Combo w="w-[181px]" label="无选择过滤器" />
        <div className="w-[11px] shrink-0" />
        <Combo w="w-[190px]" label="整个装配" />
        <div className="w-[13px] shrink-0" />
        <Combo w="w-[155px]" label="边界内" />
        <div className="w-[5px] shrink-0" />
        <div className="flex items-center h-[26px]">
          {SEL_ICONS.map((n, i) =>
            n === "^" ? (
              <span key={i} className="w-[19px] flex justify-center">
                <Caret />
              </span>
            ) : n === "^^" ? (
              <span key={i} className="w-[16px] flex justify-center">
                <Caret />
              </span>
            ) : (
              <span key={i} className="w-[26px] flex justify-center">
                <Ic n={n} s={18} />
              </span>
            ),
          )}
        </div>
        <span className="ml-[-1px] w-px h-[26px] bg-[#d9d9d9]" />
        <div className="flex-1 flex justify-end pr-[7px] pt-[15px]">
          <Caret />
        </div>
      </section>

      {/* Work area */}
      <main className="flex-1 min-h-0 flex">
        <aside className="w-[52px] shrink-0 flex flex-col pt-[28px]">
          {LEFT_SINGLE.map((n, i) =>
            n === "^" ? (
              <span key={i} className="h-[18px] flex items-center justify-center">
                <Caret />
              </span>
            ) : (
              <span key={i} className="h-[32px] flex items-center justify-center">
                <Ic n={n} s={24} />
              </span>
            ),
          )}
          <div className="grid grid-cols-[26px_24px]">
            {LEFT_GRID.map((n, i) => (
              <span key={i} className="h-[24px] flex items-center justify-center">
                <Ic n={n} s={16} />
              </span>
            ))}
          </div>
          <div className="mt-[7px] mx-[4px] border-t border-[#d9d9d9]" />
          <span className="mt-[39px] ml-[8px] w-0 h-0 border-y-[4px] border-r-[5px] border-y-transparent border-r-[#222]" />
        </aside>

        <div className="flex-1 min-w-0 flex flex-col">
          <div className="h-[22px] shrink-0" />
          <div className="h-[28px] shrink-0 flex items-stretch pl-[1px]">
            <div className="w-[107px] flex items-center pl-[6px] gap-[4px] text-[15px] whitespace-nowrap">
              <Ic n="discover" s={16} />
              发现中心
            </div>
            <div className="w-[146px] bg-[#046a91] text-white flex items-center pl-[5px] gap-[3px] text-[16px]">
              <Ic n="bracket" s={16} />
              <span>model1.prt</span>
              <Ic n="docSm" s={12} className="ml-[2px]" />
              <Ic n="close" s={11} className="ml-[1px]" />
            </div>
          </div>
          <div className="flex-1 relative border-t-[3px] border-l border-[#046a91] border-l-[#c4c4c4] bg-linear-to-b from-[#0883f4] from-0% via-[#6aa3dc] via-[50%] to-[#bebebe] to-[75%]">
            <svg className="absolute left-[830px] top-[300px]" width="130" height="90" viewBox="0 0 130 90">
              <polygon points="15,14 19,45 16,66 13,45" fill="#2f8a30" />
              <polygon points="19,72 65,68 72,71 60,74" fill="#d8322c" />
              <polygon points="4,74 12,70 10,77 6,78" fill="#0a50e8" />
              <text x="24" y="14" fontSize="13" fill="#2f9a4a" fontFamily="Liberation Sans">YC</text>
              <text x="59" y="66" fontSize="13" fill="#e03a34" fontFamily="Liberation Sans">XC</text>
              <text x="9" y="88" fontSize="13" fill="#1442f0" fontFamily="Liberation Sans">ZC</text>
            </svg>
            <svg className="absolute left-[70px] top-[555px]" width="170" height="110" viewBox="0 0 170 110">
              <text x="23" y="13" fontSize="12" fill="#4cab62" fontFamily="Liberation Sans">Y</text>
              <path d="M7 68H47L52 64V103L47 107H7ZM7 68 12 64H52M47 68V107" fill="none" stroke="#b0b0b0" />
              <polygon points="29,18 34,37 31,37 32,65 26,65 27,37 24,37" fill="#2b8a34" />
              <polygon points="49,81 85,81 85,78 97,84 85,90 85,87 49,87" fill="#c9302a" />
              <text x="100" y="88" fontSize="12" fill="#de5a5a" fontFamily="Liberation Sans">X</text>
              <ellipse cx="22" cy="89" rx="6" ry="3.5" fill="#0a3fe0" transform="rotate(-20 22 89)" />
              <text x="14" y="96" fontSize="10" fill="#2b50e8" fontFamily="Liberation Sans">Z</text>
            </svg>
          </div>
        </div>

        {/* Part navigator */}
        <aside className="w-[136px] shrink-0 border-x border-[#a6a6a6] flex flex-col pl-[12px] pr-[7px] -ml-px">
          <div className="h-[52px] shrink-0 pt-[22px] flex items-start">
            <div className="flex items-center h-[28px] w-full">
              <Ic n="bracket" s={16} className="mr-[3px]" />
              <span className="text-[15px] leading-none whitespace-nowrap">部件导航器</span>
              <span className="ml-[9px] w-[12px] h-[10px] border border-[#111] border-t-2" />
            </div>
          </div>
          <div className="border border-[#dedede] flex flex-col h-[611px] shrink-0">
            <div className="h-[24px] border-b border-[#dedede] shrink-0 flex items-center pl-[6px]">
              <span>名称</span>
              <span className="ml-[18px] w-0 h-0 border-x-[5px] border-b-[6px] border-x-transparent border-b-[#111]" />
            </div>
            <div className="flex-1 overflow-hidden whitespace-nowrap relative">
              <div className="h-[24px] border-b border-[#eee] flex items-center pl-[18px] overflow-hidden">
                <Ic n="clock" s={16} className="mr-[3px]" />
                历史记录建模
              </div>
              <div className="h-[24px] border-b border-[#eee] flex items-center pl-[5px] overflow-hidden">
                <TreeBox />
                <Ic n="viewFolder" s={16} className="ml-[3px] mr-[2px]" />
                模型视图
              </div>
              <div className="h-[24px] border-b border-[#eee] flex items-center pl-[5px] overflow-hidden">
                <TreeBox />
                <svg viewBox="0 0 16 16" width={15} height={15} className="ml-[4px] shrink-0">
                  <path d="M1 8 6 14 15 2" fill="none" stroke="#29d24a" strokeWidth="2" />
                </svg>
                <Ic n="cam" s={15} className="mx-[2px]" />
                摄像机
              </div>
              <div className="h-[24px] border-b border-[#eee] flex items-center pl-[5px] overflow-hidden">
                <TreeBox minus />
                <Ic n="ball" s={15} className="ml-[4px]" />
                <Ic n="history" s={16} className="mx-[1px]" />
                模型历史
              </div>
              <div className="h-[24px] border-b border-[#eee] flex items-center pl-[39px] overflow-hidden">
                <Ic n="dashed" s={14} className="mr-[1px]" />
                <Ic n="datumCsys" s={15} className="mr-[3px]" />
                <span className="text-[#a8a8a8] font-bold">基准坐标系</span>
              </div>
              {Array.from({ length: 23 }, (_, i) => (
                <div key={i} className={`h-[24px] border-b border-[#eee] ${i % 2 === 0 ? "bg-[#fafafa]" : "bg-white"}`} />
              ))}
              <div className="absolute left-[10px] top-[12px] h-[60px] border-l border-dotted border-[#999]" />
              <div className="absolute left-[10px] top-[12px] w-[8px] border-t border-dotted border-[#999]" />
            </div>
            <div className="h-[20px] shrink-0 bg-[#f0f0f0] flex items-center justify-between pl-[7px] pr-[7px] relative">
              <svg viewBox="0 0 8 12" width={7} height={11}>
                <path d="M7 1 2 6 7 11" fill="none" stroke="#444" strokeWidth="2" />
              </svg>
              <span className="absolute left-[21px] top-0 w-[21px] h-full bg-[#cdcdcd]" />
              <svg viewBox="0 0 8 12" width={7} height={11}>
                <path d="M1 1 6 6 1 11" fill="none" stroke="#444" strokeWidth="2" />
              </svg>
            </div>
          </div>
          <div className="mt-[4px] mb-[1px] h-[8px] shrink-0 bg-[#d6d6d6] border border-[#aaa]" />
          {["搜索", "相关性", "细节", "预览"].map((label) => (
            <div key={label} className="h-[28px] shrink-0 border-b-2 border-[#d0d0d0] flex items-center pl-[11px] text-[#046a91] text-[18px]">
              <span className="w-0 h-0 border-y-[5px] border-l-[6px] border-y-transparent border-l-[#046a91] mr-[10px]" />
              <span className="leading-none">{label}</span>
            </div>
          ))}
        </aside>

        {/* Resource rail */}
        <aside className="w-[37px] shrink-0 bg-[#dcdcdc] mt-[22px] flex flex-col items-center relative">
          <span className="h-[34px] w-full flex items-center justify-center">
            <Settings size={19} strokeWidth={1.1} className="text-[#444]" />
          </span>
          {RAIL.map(([n, cls]) => (
            <span key={n} className={`flex items-center justify-center ${cls}`}>
              <Ic n={n} s={24} />
            </span>
          ))}
        </aside>
      </main>

      {/* Status bar */}
      <footer className="h-[30px] shrink-0 flex items-center border-t border-[#ececec] pl-[9px]">
        {STATUS.map(([icon, label, w]) => (
          <span key={label} className={`${w} shrink-0 flex items-center whitespace-nowrap gap-[4px]`}>
            <Ic n={icon} s={16} />
            {label}
          </span>
        ))}
        <span className="w-px h-[24px] bg-[#ddd]" />
      </footer>
      <div className="h-[9px] shrink-0 bg-[#1f2f39] pl-[1167px]">
        <div className="w-[157px] h-full bg-[#4e5b63]" />
      </div>

      {/* Forum watermark sits over the status bar and task bar */}
      <span className="absolute right-[2px] bottom-[4px] text-[14.5px] leading-none italic text-[#8f8f8f] font-['Liberation_Mono','Noto_Sans_CJK_SC',monospace] tracking-[-0.5px] whitespace-nowrap">
        UG爱好者论坛@dxb24468827
      </span>
      <Caret className="absolute right-[7px] bottom-[19px]" />
    </div>
  );
}
